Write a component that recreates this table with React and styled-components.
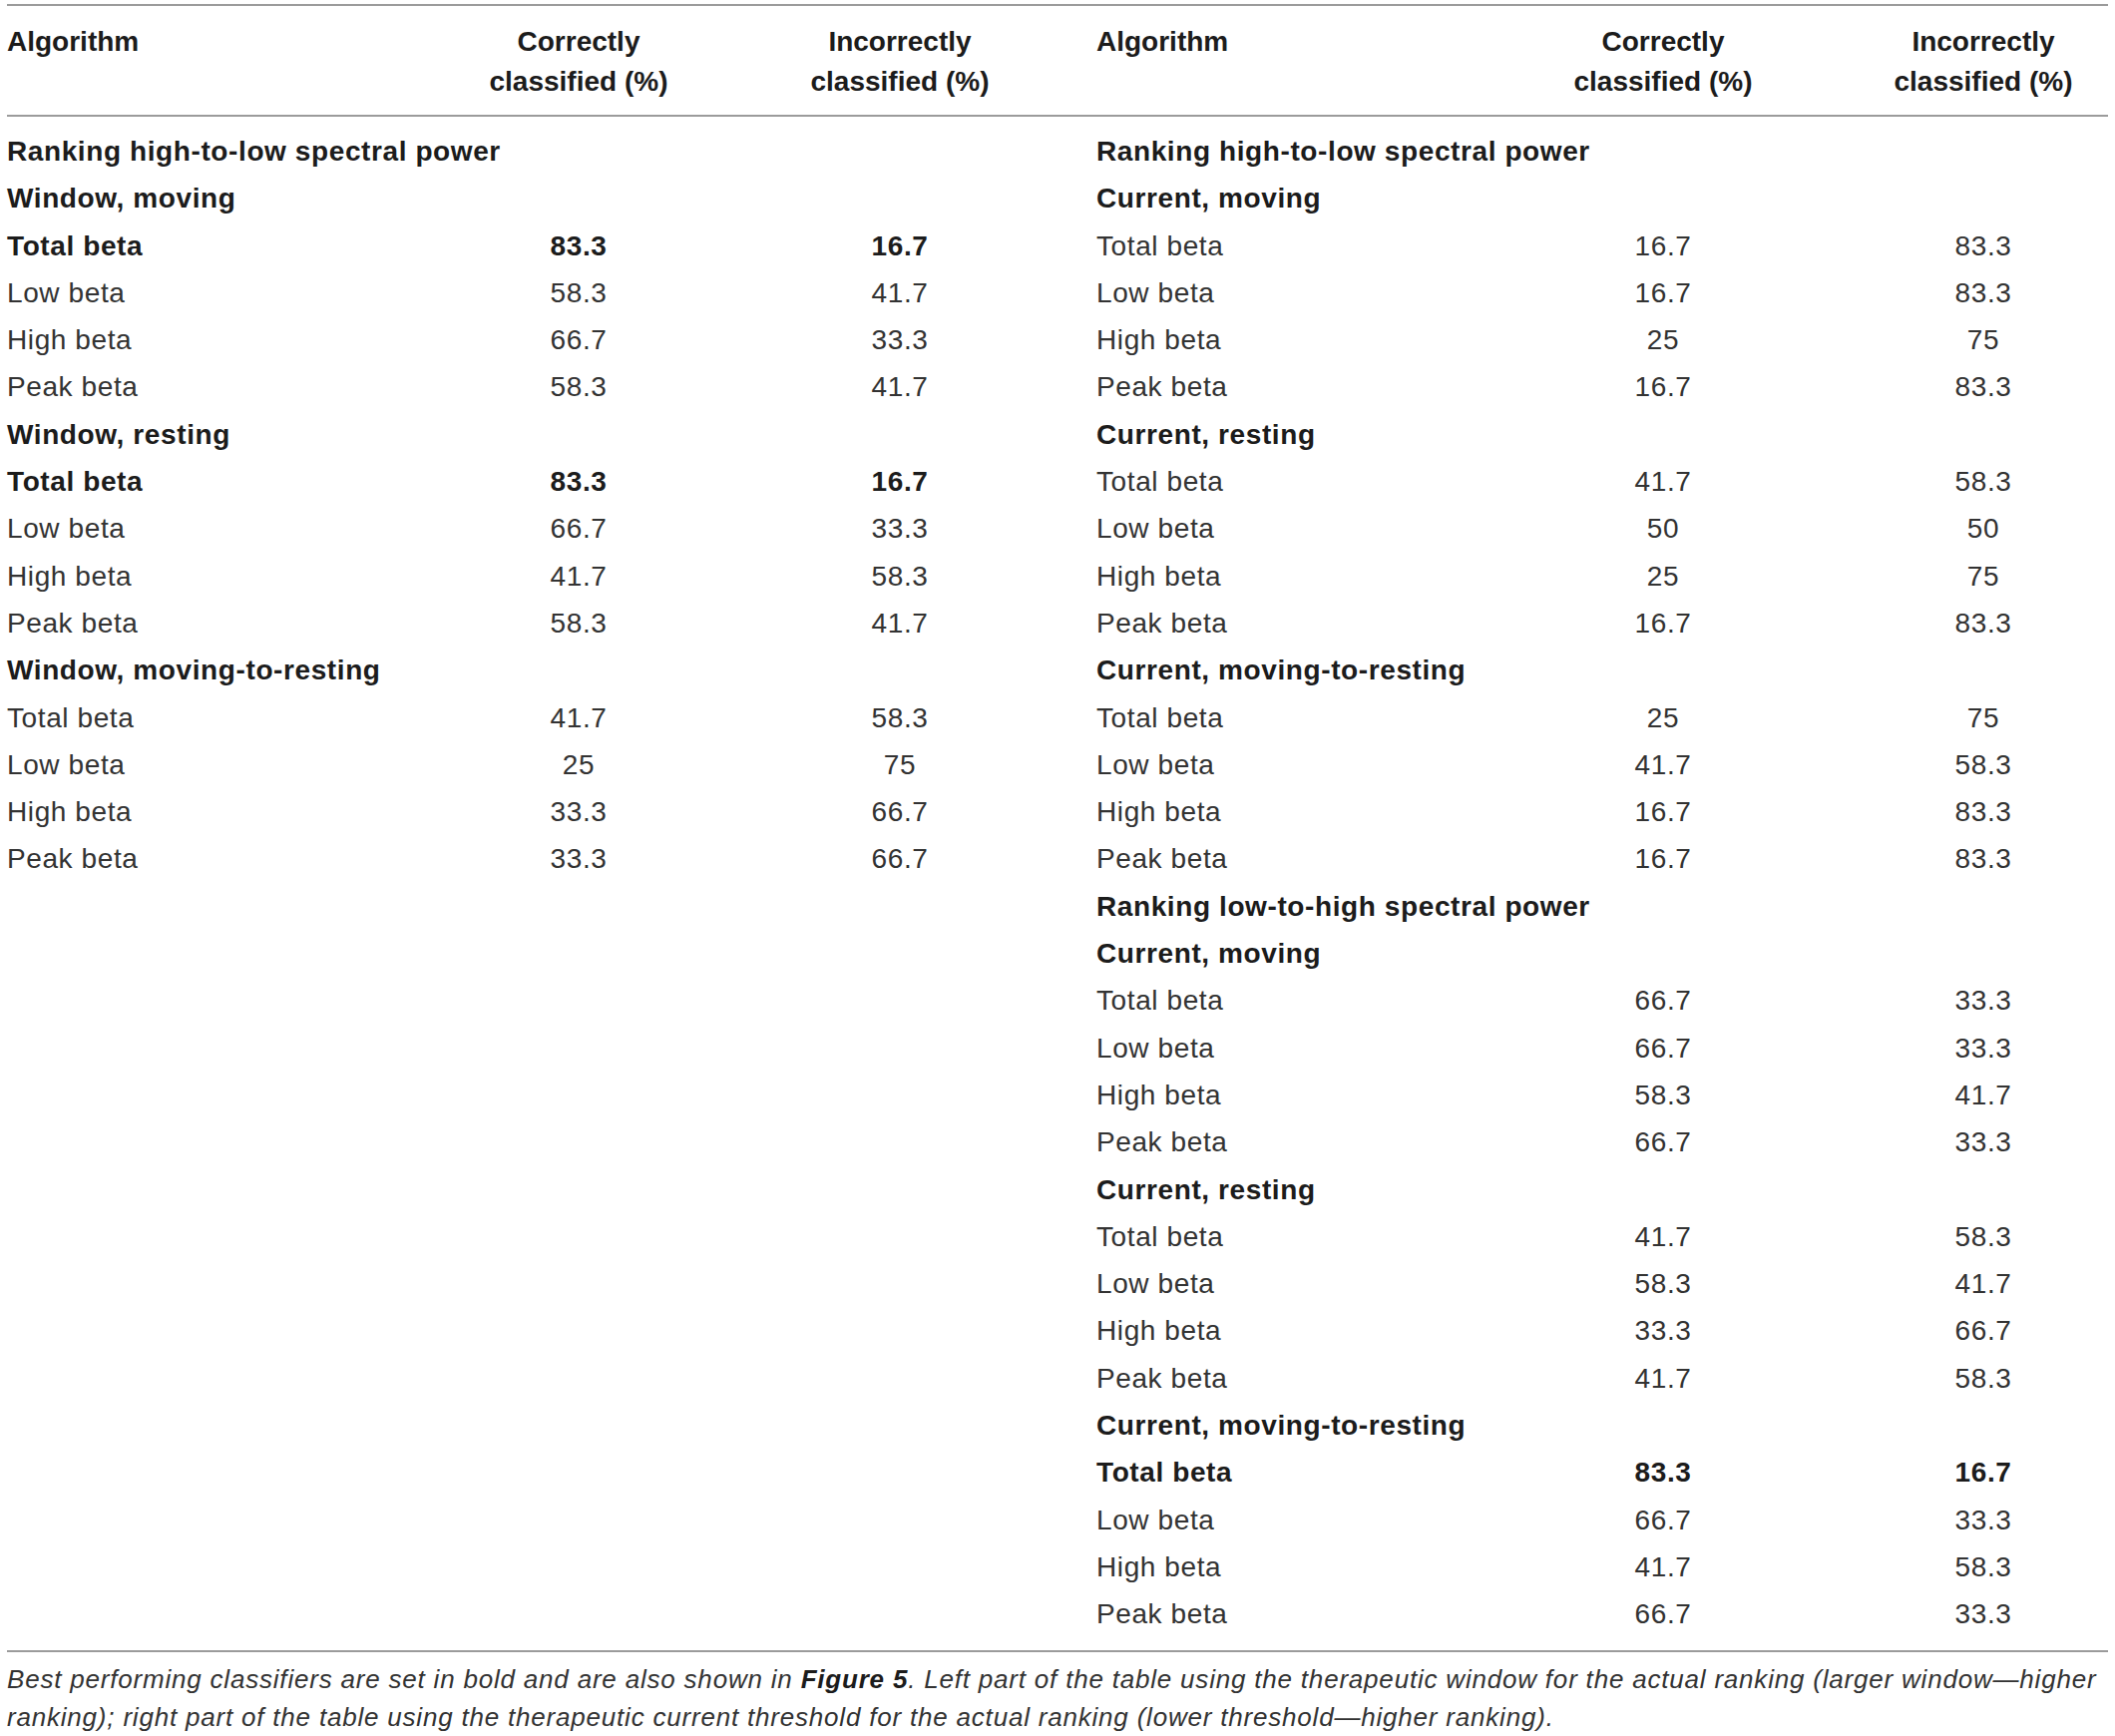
import React from 'react'
import styled, { createGlobalStyle } from 'styled-components'

const left = [
  { kind: 'head', label: 'Ranking high-to-low spectral power' },
  { kind: 'head', label: 'Window, moving' },
  { label: 'Total beta', c: '83.3', i: '16.7', bold: true },
  { label: 'Low beta', c: '58.3', i: '41.7' },
  { label: 'High beta', c: '66.7', i: '33.3' },
  { label: 'Peak beta', c: '58.3', i: '41.7' },
  { kind: 'head', label: 'Window, resting' },
  { label: 'Total beta', c: '83.3', i: '16.7', bold: true },
  { label: 'Low beta', c: '66.7', i: '33.3' },
  { label: 'High beta', c: '41.7', i: '58.3' },
  { label: 'Peak beta', c: '58.3', i: '41.7' },
  { kind: 'head', label: 'Window, moving-to-resting' },
  { label: 'Total beta', c: '41.7', i: '58.3' },
  { label: 'Low beta', c: '25', i: '75' },
  { label: 'High beta', c: '33.3', i: '66.7' },
  { label: 'Peak beta', c: '33.3', i: '66.7' },
]

const right = [
  { kind: 'head', label: 'Ranking high-to-low spectral power' },
  { kind: 'head', label: 'Current, moving' },
  { label: 'Total beta', c: '16.7', i: '83.3' },
  { label: 'Low beta', c: '16.7', i: '83.3' },
  { label: 'High beta', c: '25', i: '75' },
  { label: 'Peak beta', c: '16.7', i: '83.3' },
  { kind: 'head', label: 'Current, resting' },
  { label: 'Total beta', c: '41.7', i: '58.3' },
  { label: 'Low beta', c: '50', i: '50' },
  { label: 'High beta', c: '25', i: '75' },
  { label: 'Peak beta', c: '16.7', i: '83.3' },
  { kind: 'head', label: 'Current, moving-to-resting' },
  { label: 'Total beta', c: '25', i: '75' },
  { label: 'Low beta', c: '41.7', i: '58.3' },
  { label: 'High beta', c: '16.7', i: '83.3' },
  { label: 'Peak beta', c: '16.7', i: '83.3' },
  { kind: 'head', label: 'Ranking low-to-high spectral power' },
  { kind: 'head', label: 'Current, moving' },
  { label: 'Total beta', c: '66.7', i: '33.3' },
  { label: 'Low beta', c: '66.7', i: '33.3' },
  { label: 'High beta', c: '58.3', i: '41.7' },
  { label: 'Peak beta', c: '66.7', i: '33.3' },
  { kind: 'head', label: 'Current, resting' },
  { label: 'Total beta', c: '41.7', i: '58.3' },
  { label: 'Low beta', c: '58.3', i: '41.7' },
  { label: 'High beta', c: '33.3', i: '66.7' },
  { label: 'Peak beta', c: '41.7', i: '58.3' },
  { kind: 'head', label: 'Current, moving-to-resting' },
  { label: 'Total beta', c: '83.3', i: '16.7', bold: true },
  { label: 'Low beta', c: '66.7', i: '33.3' },
  { label: 'High beta', c: '41.7', i: '58.3' },
  { label: 'Peak beta', c: '66.7', i: '33.3' },
]

// column widths of each half of the table
const LEFT_COLS = '448px 250px 394px'
const RIGHT_COLS = '372px 392px 1fr'

const Half = ({ cols, rows }) => (
  <HalfBody>
    {rows.map((r, idx) =>
      r.kind === 'head' ? (
        <Row key={idx} cols={cols}>
          <GroupCell>{r.label}</GroupCell>
        </Row>
      ) : (
        <Row key={idx} cols={cols} bold={r.bold}>
          <LabelCell>{r.label}</LabelCell>
          <NumCell>{r.c}</NumCell>
          <NumCell>{r.i}</NumCell>
        </Row>
      )
    )}
  </HalfBody>
)

const HeadHalf = ({ cols }) => (
  <HeadRow cols={cols}>
    <HeadLabel>Algorithm</HeadLabel>
    <HeadNum>
      Correctly
      <br />
      classified (%)
    </HeadNum>
    <HeadNum>
      Incorrectly
      <br />
      classified (%)
    </HeadNum>
  </HeadRow>
)

const App = () => {
  return (
    <>
      <GlobalStyle />
      <StyledTable>
        <Header>
          <HeadHalf cols={LEFT_COLS} />
          <HeadHalf cols={RIGHT_COLS} />
        </Header>
        <Body>
          <Half cols={LEFT_COLS} rows={left} />
          <Half cols={RIGHT_COLS} rows={right} />
        </Body>
        <Footnote>
          <span>
            Best performing classifiers are set in bold and are also shown in{' '}
            <b>Figure 5</b>. Left part of the table using the therapeutic window
            for the actual ranking (larger window—higher
          </span>
          <span>
            ranking); right part of the table using the therapeutic current
            threshold for the actual ranking (lower threshold—higher ranking).
          </span>
        </Footnote>
      </StyledTable>
    </>
  )
}

const GlobalStyle = createGlobalStyle`
  body {
    margin: 0;
    background: #ffffff;
    font-family: "Liberation Sans", Arial, sans-serif;
    color: #333333;
  }
`

const StyledTable = styled.div`
  width: 2106px;
  margin: 4px 7px 0;
  font-size: 28px;
`

const Header = styled.div`
  display: grid;
  grid-template-columns: 1092px 1fr;
  border-top: 2px solid #9b9b9b;
  border-bottom: 2px solid #9b9b9b;
  padding: 16px 0 13px;
`

const HeadRow = styled.div`
  display: grid;
  grid-template-columns: ${(p) => p.cols};
  line-height: 40px;
  font-weight: 700;
  color: #1c1c1c;
`

const HeadLabel = styled.div`
  text-align: left;
`

const HeadNum = styled.div`
  text-align: center;
`

const Body = styled.div`
  display: grid;
  grid-template-columns: 1092px 1fr;
  align-items: start;
  padding: 11px 0 12px;
  border-bottom: 2px solid #9b9b9b;
`

const HalfBody = styled.div`
  display: flex;
  flex-direction: column;
`

const Row = styled.div`
  display: grid;
  grid-template-columns: ${(p) => p.cols};
  height: 47.3px;
  line-height: 47.3px;
  letter-spacing: 0.6px;
  font-weight: ${(p) => (p.bold ? 700 : 400)};
  color: ${(p) => (p.bold ? '#1c1c1c' : '#333333')};
`

const GroupCell = styled.div`
  grid-column: 1 / -1;
  font-weight: 700;
  color: #1c1c1c;
  white-space: nowrap;
`

const LabelCell = styled.div`
  white-space: nowrap;
`

const NumCell = styled.div`
  text-align: center;
`

const Footnote = styled.p`
  margin: 8px 0 0;
  font-size: 26px;
  line-height: 38px;
  letter-spacing: 0.8px;
  font-style: italic;
  color: #333333;
  span {
    display: block;
    white-space: nowrap;
  }
  b {
    font-weight: 700;
    color: #1c1c1c;
  }
`

export default App
